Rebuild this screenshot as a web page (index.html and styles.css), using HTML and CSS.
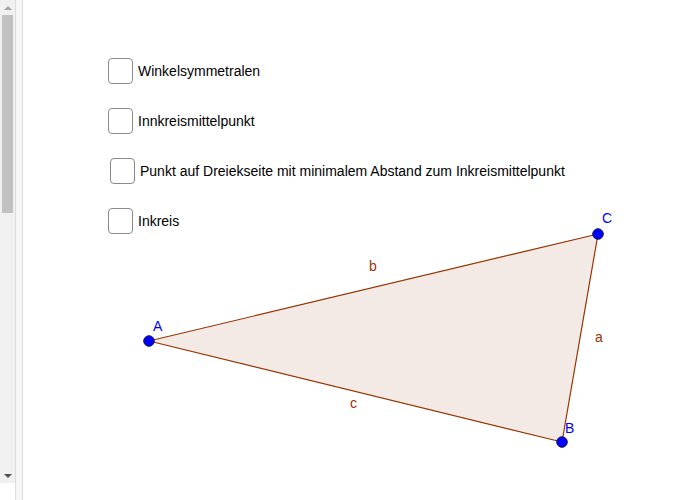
FILE: index.html
```html
<!DOCTYPE html>
<html>
<head>
<meta charset="utf-8">
<link rel="stylesheet" href="styles.css">
</head>
<body>
<div class="app">
  <div class="scrollbar">
    <div class="arrow up"></div>
    <div class="thumb"></div>
    <div class="track"></div>
    <div class="arrow down"></div>
  </div>
  <div class="strip"></div>
  <div class="canvas">
    <div class="checks">
      <label class="check"><span class="box"></span><span class="txt">Winkelsymmetralen</span></label>
      <label class="check"><span class="box"></span><span class="txt">Innkreismittelpunkt</span></label>
      <label class="check shifted"><span class="box"></span><span class="txt">Punkt auf Dreiekseite mit minimalem Abstand zum Inkreismittelpunkt</span></label>
      <label class="check"><span class="box"></span><span class="txt">Inkreis</span></label>
    </div>
    <svg class="drawing" width="678" height="500" viewBox="22 0 678 500">
      <polygon points="148,341 561,442 597,234" fill="#f4eae5" stroke="none"/>
      <line x1="148" y1="341" x2="561" y2="442" stroke="#993300" stroke-width="1.2"/>
      <line x1="561" y1="442" x2="597" y2="234" stroke="#993300" stroke-width="1.2"/>
      <line x1="597" y1="234" x2="148" y2="341" stroke="#993300" stroke-width="1.2"/>
      <text class="seg" x="368" y="271">b</text>
      <text class="seg" x="594" y="342">a</text>
      <text class="seg" x="349" y="408">c</text>
      <circle cx="148" cy="341" r="5.3" fill="#0000ff" stroke="#1a1a4d" stroke-width="1"/>
      <circle cx="561" cy="442" r="5.3" fill="#0000ff" stroke="#1a1a4d" stroke-width="1"/>
      <circle cx="597" cy="234" r="5.3" fill="#0000ff" stroke="#1a1a4d" stroke-width="1"/>
      <text class="pt" x="152" y="331">A</text>
      <text class="pt" x="601" y="223">C</text>
      <text class="pt" x="564" y="433">B</text>
    </svg>
  </div>
</div>
</body>
</html>
```

FILE: styles.css
```css
html, body {
  margin: 0;
  padding: 0;
  background: #ffffff;
  font-family: "Liberation Sans", Arial, sans-serif;
}
.app {
  display: flex;
  width: 700px;
  height: 500px;
  overflow: hidden;
}
.scrollbar {
  width: 15px;
  height: 500px;
  display: flex;
  flex-direction: column;
  border-right: 1px solid #dcdcdc;
  box-sizing: content-box;
}
.scrollbar .arrow {
  height: 15px;
  background: #f0f0f0;
  display: flex;
  align-items: center;
  justify-content: center;
  flex: none;
}
.scrollbar .arrow.up::before {
  content: "";
  border-left: 4px solid transparent;
  border-right: 4px solid transparent;
  border-bottom: 4px solid #a3a3a3;
}
.scrollbar .arrow.down {
  margin-bottom: 17px;
}
.scrollbar .arrow.down::before {
  content: "";
  border-left: 4px solid transparent;
  border-right: 4px solid transparent;
  border-top: 4px solid #505050;
}
.scrollbar .thumb {
  height: 198px;
  background: #c1c1c1;
  margin: 0 2px;
  flex: none;
  box-shadow: 0 0 0 2px #f0f0f0;
}
.scrollbar .track {
  flex: 1;
  background: #f0f0f0;
}
.strip {
  width: 6px;
  height: 500px;
  background: #f7f7f7;
  border-right: 1px solid #dcdcdc;
  flex: none;
}
.canvas {
  position: relative;
  flex: 1;
  height: 500px;
}
.checks {
  display: flex;
  flex-direction: column;
  gap: 23px;
  padding: 57px 0 0 85px;
}
.check {
  display: flex;
  align-items: center;
  height: 27px;
  font-size: 14px;
  color: #000;
}
.check.shifted {
  padding-left: 2px;
}
.box {
  width: 23px;
  height: 24px;
  border: 1.5px solid #8a8a8a;
  border-radius: 4px;
  background: #fff;
  margin-right: 5px;
  flex: none;
}
.check.shifted .box {
  margin-right: 5px;
}
.drawing {
  position: absolute;
  left: 0;
  top: 0;
}
.seg {
  font-family: "Liberation Sans", Arial, sans-serif;
  font-size: 14px;
  fill: #993300;
}
.pt {
  font-family: "Liberation Sans", Arial, sans-serif;
  font-size: 14px;
  fill: #0000ff;
}
```
